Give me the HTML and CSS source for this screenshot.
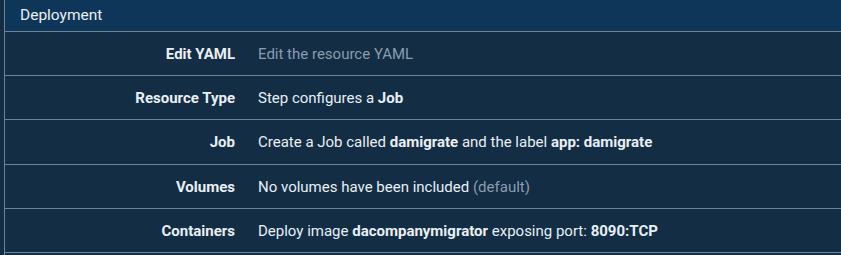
FILE: index.html
```html
<!DOCTYPE html>
<html lang="en">

<head>
  <meta charset="UTF-8">
  <meta name="viewport" content="width=device-width, initial-scale=1.0">
  <title>Deployment</title>
  <link rel="stylesheet" href="styles.css">
</head>

<body>
  <div class="panel">
    <!-- titulo -->
    <div class="panel-header">Deployment</div>

    <!-- linhas -->
    <div class="row">
      <div class="label">Edit YAML</div>
      <div class="value muted">Edit the resource YAML</div>
    </div>
    <div class="row">
      <div class="label">Resource Type</div>
      <div class="value">Step configures a <strong>Job</strong></div>
    </div>
    <div class="row">
      <div class="label">Job</div>
      <div class="value">Create a Job called <strong>damigrate</strong> and the label <strong>app: damigrate</strong></div>
    </div>
    <div class="row">
      <div class="label">Volumes</div>
      <div class="value">No volumes have been included <span class="muted">(default)</span></div>
    </div>
    <div class="row">
      <div class="label">Containers</div>
      <div class="value">Deploy image <strong>dacompanymigrator</strong> exposing port: <strong>8090:TCP</strong></div>
    </div>
  </div>
</body>

</html>
```

FILE: styles.css
```css
body {
  margin: 0;
  padding-left: 4px;
  background: #122d44;
  font-family: Roboto, "Liberation Sans", sans-serif;
  font-size: 15px;
  color: #e9eff5;
}

.panel {
  border-left: 1px solid #6f8294;
  min-height: 255px;
}

.panel-header {
  height: 31px;
  line-height: 30px;
  padding-left: 15px;
  font-size: 15.5px;
  background: #0e3659;
  border-bottom: 1px solid #6f8294;
}

.row {
  display: grid;
  grid-template-columns: 242px 1fr;
  height: 43px;
  align-items: center;
  border-bottom: 1px solid #6f8294;
}

/* a linha do Job fica um px mais alta */
.row:nth-child(4) {
  height: 44px;
}

.label {
  text-align: right;
  padding-right: 12px;
  font-weight: bold;
}

.value {
  padding-left: 11px;
}

.muted {
  color: #8b9cad;
}
```
